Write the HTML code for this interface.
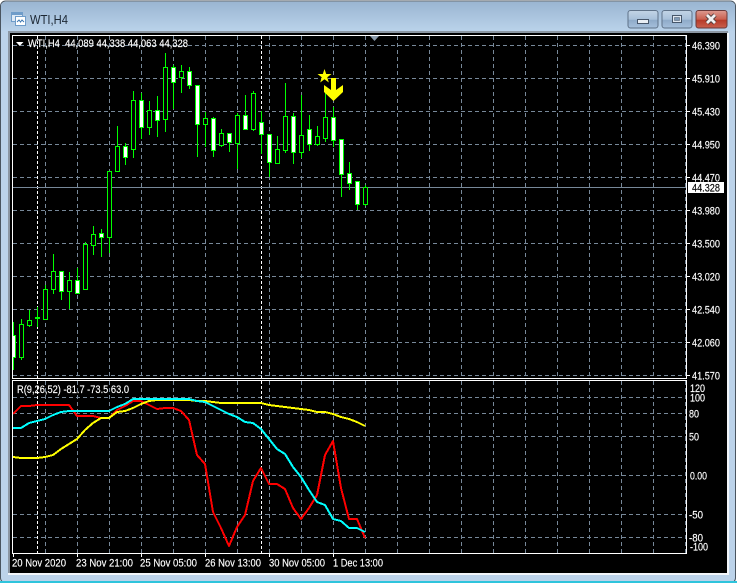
<!DOCTYPE html>
<html>
<head>
<meta charset="utf-8">
<style>
html,body{margin:0;padding:0;background:#fff;width:739px;height:583px;overflow:hidden}
svg{display:block}
text{font-family:"Liberation Sans",sans-serif;font-size:11px;fill:#fff;stroke:#fff;stroke-width:.15}
.g{stroke:#778899;stroke-width:1;stroke-dasharray:4 3;fill:none}
.w{stroke:#fff;stroke-width:1;stroke-dasharray:3 2;fill:none}
</style>
</head>
<body>
<svg width="739" height="583" viewBox="0 0 739 583" xmlns="http://www.w3.org/2000/svg">
<defs>
<linearGradient id="t" x1="0" y1="0" x2="0" y2="1"><stop offset="0" stop-color="#9ab5d2"/><stop offset="1" stop-color="#bad2ea"/></linearGradient>
<linearGradient id="b" x1="0" y1="0" x2="0" y2="1"><stop offset="0" stop-color="#c3d4e6"/><stop offset=".5" stop-color="#a9c1da"/><stop offset=".55" stop-color="#8fabc9"/><stop offset="1" stop-color="#a6c0dc"/></linearGradient>
<linearGradient id="r" x1="0" y1="0" x2="0" y2="1"><stop offset="0" stop-color="#dd9a90"/><stop offset=".5" stop-color="#c9604f"/><stop offset=".55" stop-color="#b73a28"/><stop offset="1" stop-color="#c9604e"/></linearGradient>
<clipPath id="mc"><rect x="13" y="36" width="673" height="342"/></clipPath>
<clipPath id="ic"><rect x="13" y="381" width="673" height="172"/></clipPath>
</defs>

<!-- window frame -->
<rect x="0" y="0" width="739" height="583" fill="#fff"/>
<rect x="0.5" y="1" width="735" height="582" rx="5" fill="#bcd3ea" stroke="#4a5560"/>
<path d="M1 6Q1 2 5 2H731Q735 2 735 6V31H1Z" fill="url(#t)"/>
<rect x="0" y="581" width="737" height="2" fill="#2ec4dc"/>
<rect x="8" y="31" width="720" height="2" fill="#8c97a3"/>
<rect x="8" y="31" width="2" height="544" fill="#8c97a3"/>
<rect x="10" y="33" width="717" height="540" fill="#000"/>
<rect x="727" y="33" width="2" height="542" fill="#f2f6fa"/>
<rect x="8" y="573" width="721" height="2" fill="#f2f6fa"/>

<!-- title icon -->
<rect x="11.5" y="12.5" width="11" height="9" fill="#dfeaf6" stroke="#6f9cc9"/>
<rect x="12" y="13" width="10" height="2" fill="#6f9cc9"/>
<rect x="15.5" y="16.5" width="10" height="9" fill="#fff" stroke="#6f9cc9"/>
<path d="M17 22l2-2 1.500 2 1.500-2 2 2" stroke="#3d78b3" fill="none"/>
<text x="30" y="24" style="font-size:12.500px;fill:#1c2733;stroke:none" textLength="38" lengthAdjust="spacingAndGlyphs">WTI,H4</text>

<!-- window buttons -->
<rect x="628" y="10.500" width="30" height="17.500" rx="2.500" fill="url(#b)" stroke="#5f7288"/>
<rect x="637.500" y="19.500" width="11" height="4" fill="#e9eef4" stroke="#46566a"/>
<rect x="662" y="10.500" width="30" height="17.500" rx="2.500" fill="url(#b)" stroke="#5f7288"/>
<rect x="672.500" y="15.500" width="9" height="7" fill="#dfe7f0" stroke="#46566a"/>
<rect x="674.500" y="17.500" width="5" height="3" fill="#7f9ab6" stroke="#46566a" stroke-width=".5"/>
<rect x="696" y="10.500" width="31" height="17.500" rx="2.500" fill="url(#r)" stroke="#6a3a3a"/>
<path d="M707 15l8 8M715 15l-8 8" stroke="#4a3a3a" stroke-width="4.500"/>
<path d="M707 15l8 8M715 15l-8 8" stroke="#f1f1f1" stroke-width="2.800"/>

<!-- main grid -->
<path class="g" d="M13 45.500H686M13 78.500H686M13 111.500H686M13 144.500H686M13 177.500H686M13 210.500H686M13 243.500H686M13 276.500H686M13 309.500H686M13 342.500H686M13 375.500H686"/>
<path class="g" d="M45.500 36V378M77.500 36V378M109.500 36V378M141.500 36V378M173.500 36V378M205.500 36V378M237.500 36V378M269.500 36V378M301.500 36V378M333.500 36V378M365.500 36V378M397.500 36V378M429.500 36V378M461.500 36V378M493.500 36V378M525.500 36V378M557.500 36V378M589.500 36V378M621.500 36V378M653.500 36V378M685.500 36V378"/>
<path class="w" d="M37.500 36V378M261.500 36V378"/>
<rect x="13" y="187" width="673" height="1" fill="#778899"/>

<!-- candles -->
<g clip-path="url(#mc)" stroke="#00ff00" stroke-width="1" shape-rendering="crispEdges">
<path fill="none" d="M13.500 322V370M21.500 319V360M29.500 310V327M37.500 307V327M45.500 285V319M53.500 254V294M61.500 271V300M69.500 272V309M77.500 268V293M85.500 242V289M93.500 226V255M101.500 229V257M109.500 171V253M117.500 126V171M125.500 143V165M133.500 91V158M141.500 93V139M149.500 101V135M157.500 96V137M165.500 53V132M173.500 65V109M181.500 65V93M189.500 67V89M197.500 85V157M205.500 112V147M213.500 117V157M221.500 129V147M229.500 133V152M237.500 113V169M245.500 95V129M253.500 91V131M261.500 111V154M269.500 134V177M277.500 136V164M285.500 83V153M293.500 113V164M301.500 95V158M309.500 115V151M317.500 126V146M325.500 93V142M333.500 107V147M341.500 139V197M349.500 162V190M357.500 181V210M365.500 185V206"/>
<path fill="#000" d="M19.500 324.500h4v33h-4zM27.500 320.500h4v5h-4zM43.500 289.500h4v30h-4zM51.500 271.500h4v18h-4zM67.500 280.500h4v11h-4zM83.500 244.500h4v45h-4zM91.500 234.500h4v11h-4zM107.500 171.500h4v66h-4zM115.500 146.500h4v25h-4zM131.500 100.500h4v49h-4zM147.500 110.500h4v17h-4zM163.500 67.500h4v52h-4zM179.500 71.500h4v6h-4zM203.500 118.500h4v6h-4zM219.500 133.500h4v12h-4zM235.500 115.500h4v28h-4zM251.500 93.500h4v36h-4zM275.500 149.500h4v14h-4zM283.500 116.500h4v34h-4zM299.500 135.500h4v17h-4zM315.500 136.500h4v8h-4zM323.500 117.500h4v21h-4zM363.500 187.500h4v17h-4z"/>
<path fill="#fff" d="M11.500 335.500h4v22h-4zM35.500 317.500h4v1h-4zM59.500 271.500h4v20h-4zM75.500 280.500h4v13h-4zM99.500 233.500h4v4h-4zM123.500 146.500h4v11h-4zM139.500 100.500h4v27h-4zM155.500 110.500h4v10h-4zM171.500 67.500h4v15h-4zM187.500 71.500h4v14h-4zM195.500 85.500h4v39h-4zM211.500 118.500h4v32h-4zM227.500 133.500h4v9h-4zM243.500 115.500h4v14h-4zM259.500 122.500h4v12h-4zM267.500 134.500h4v28h-4zM291.500 116.500h4v36h-4zM307.500 129.500h4v15h-4zM331.500 117.500h4v23h-4zM339.500 139.500h4v35h-4zM347.500 173.500h4v10h-4zM355.500 181.500h4v23h-4z"/>
</g>

<!-- star and arrow -->
<polygon points="324.500,69 326.200,74 331.500,74 327.300,77.200 328.800,82.500 324.500,79.300 320.200,82.500 321.700,77.200 317.500,74 322.800,74" fill="#ffff00"/>
<polygon points="331,78 336,78 336,90 343,85 343,92 333.500,101 324,92 324,85 331,90" fill="#ffff00"/>

<!-- top triangle -->
<polygon points="370,36 379,36 374.500,41" fill="#8a9aab"/>

<!-- legend -->
<polygon points="16,42 23.500,42 19.750,46" fill="#fff"/>
<text x="28" y="47" textLength="160" lengthAdjust="spacingAndGlyphs" xml:space="preserve">WTI,H4  44,089 44,338 44,063 44,328</text>

<!-- indicator grid -->
<path class="g" d="M13 397.500H686M13 413.500H686M13 436.500H686M13 475.500H686M13 514.500H686M13 537.500H686"/>
<path class="g" d="M45.500 381V553M77.500 381V553M109.500 381V553M141.500 381V553M173.500 381V553M205.500 381V553M237.500 381V553M269.500 381V553M301.500 381V553M333.500 381V553M365.500 381V553M397.500 381V553M429.500 381V553M461.500 381V553M493.500 381V553M525.500 381V553M557.500 381V553M589.500 381V553M621.500 381V553M653.500 381V553M685.500 381V553"/>
<path class="w" d="M37.500 381V553M261.500 381V553"/>

<!-- indicator lines -->
<g clip-path="url(#ic)" fill="none" stroke-width="2" shape-rendering="crispEdges" stroke-linejoin="round">
<polyline stroke="#ff0000" points="13,414 21,406 29,406 37,405 45,405 53,405 61,405 69,405 77,416 85,416 93,416 101,418 109,418 117,410 125,406 133,401 141,401 149,405 157,409 165,408 173,408 181,411 189,420 197,455 205,464 213,512 221,528 229,546 237,527 245,515 253,481 261,468 269,484 277,484 285,489 293,508 301,519 309,508 317,495 325,455 333,441 341,488 349,519 357,519 365,538"/>
<polyline stroke="#ffff00" points="13,457 21,458 29,458 37,458 45,457 53,455 61,449 69,444 77,439 85,430 93,423 101,418 109,418 117,412 125,411 133,408 141,404 149,401 157,400 165,400 173,400 181,400 189,400 197,401 205,401 213,402 221,403 229,403 237,403 245,403 253,403 261,403 269,405 277,406 285,407 293,408 301,409 309,410 317,412 325,412 333,414 341,417 349,419 357,422 365,426"/>
<polyline stroke="#00ffff" points="13,428 21,428 29,423 37,421 45,419 53,415 61,412 69,411 77,411 85,411 93,411 101,411 109,411 117,407 125,404 133,399 141,399 149,399 157,399 165,399 173,399 181,399 189,399 197,401 205,402 213,406 221,410 229,414 237,417 245,422 253,423 261,429 269,439 277,449 285,454 293,467 301,477 309,490 317,502 325,505 333,519 341,521 349,528 357,528 365,532"/>
</g>

<!-- indicator legend -->
<text x="17" y="393" textLength="112" lengthAdjust="spacingAndGlyphs">R(9,26,52) -81.7 -73.5 63.0</text>

<!-- panel borders -->
<g fill="#fff">
<rect x="12" y="35" width="675" height="1"/>
<rect x="12" y="35" width="1" height="344"/>
<rect x="686" y="35" width="1" height="344"/>
<rect x="12" y="378" width="675" height="1"/>
<rect x="12" y="380" width="675" height="1"/>
<rect x="12" y="380" width="1" height="174"/>
<rect x="686" y="380" width="1" height="174"/>
<rect x="12" y="553" width="675" height="1"/>
</g>

<!-- right axis ticks -->
<path stroke="#fff" stroke-width="1" d="M687 45.500h3M687 78.500h3M687 111.500h3M687 144.500h3M687 177.500h3M687 210.500h3M687 243.500h3M687 276.500h3M687 309.500h3M687 342.500h3M687 375.500h3"/>
<text x="692" y="49.500" textLength="28" lengthAdjust="spacingAndGlyphs">46.390</text>
<text x="692" y="82.500" textLength="28" lengthAdjust="spacingAndGlyphs">45.910</text>
<text x="692" y="115.500" textLength="28" lengthAdjust="spacingAndGlyphs">45.430</text>
<text x="692" y="148.500" textLength="28" lengthAdjust="spacingAndGlyphs">44.950</text>
<text x="692" y="181.500" textLength="28" lengthAdjust="spacingAndGlyphs">44.470</text>
<text x="692" y="214.500" textLength="28" lengthAdjust="spacingAndGlyphs">43.980</text>
<text x="692" y="247.500" textLength="28" lengthAdjust="spacingAndGlyphs">43.500</text>
<text x="692" y="280.500" textLength="28" lengthAdjust="spacingAndGlyphs">43.020</text>
<text x="692" y="313.500" textLength="28" lengthAdjust="spacingAndGlyphs">42.540</text>
<text x="692" y="346.500" textLength="28" lengthAdjust="spacingAndGlyphs">42.060</text>
<text x="692" y="379.500" textLength="28" lengthAdjust="spacingAndGlyphs">41.570</text>
<rect x="688" y="182" width="36" height="11" fill="#fff"/>
<text x="692" y="191.500" textLength="28" lengthAdjust="spacingAndGlyphs" style="fill:#000;stroke:#000">44.328</text>

<!-- indicator axis labels -->
<text x="690" y="392" textLength="15" lengthAdjust="spacingAndGlyphs">120</text>
<text x="690" y="401.500" textLength="15" lengthAdjust="spacingAndGlyphs">100</text>
<text x="689" y="417.500" textLength="10" lengthAdjust="spacingAndGlyphs">80</text>
<text x="689" y="440.500" textLength="10" lengthAdjust="spacingAndGlyphs">50</text>
<text x="690" y="479.500" textLength="17" lengthAdjust="spacingAndGlyphs">0.00</text>
<text x="689" y="518.500" textLength="14" lengthAdjust="spacingAndGlyphs">-50</text>
<text x="689" y="541.500" textLength="14" lengthAdjust="spacingAndGlyphs">-80</text>
<text x="690" y="550.500" textLength="18" lengthAdjust="spacingAndGlyphs">-100</text>

<!-- time axis -->
<path stroke="#fff" stroke-width="1" d="M13.500 554v3M77.500 554v3M141.500 554v3M205.500 554v3M269.500 554v3M333.500 554v3"/>
<text x="12" y="566.500" textLength="54" lengthAdjust="spacingAndGlyphs">20 Nov 2020</text>
<text x="76" y="566.500" textLength="57" lengthAdjust="spacingAndGlyphs">23 Nov 21:00</text>
<text x="140" y="566.500" textLength="57" lengthAdjust="spacingAndGlyphs">25 Nov 05:00</text>
<text x="205" y="566.500" textLength="56" lengthAdjust="spacingAndGlyphs">26 Nov 13:00</text>
<text x="269" y="566.500" textLength="56" lengthAdjust="spacingAndGlyphs">30 Nov 05:00</text>
<text x="333" y="566.500" textLength="50" lengthAdjust="spacingAndGlyphs">1 Dec 13:00</text>
</svg>
</body>
</html>
